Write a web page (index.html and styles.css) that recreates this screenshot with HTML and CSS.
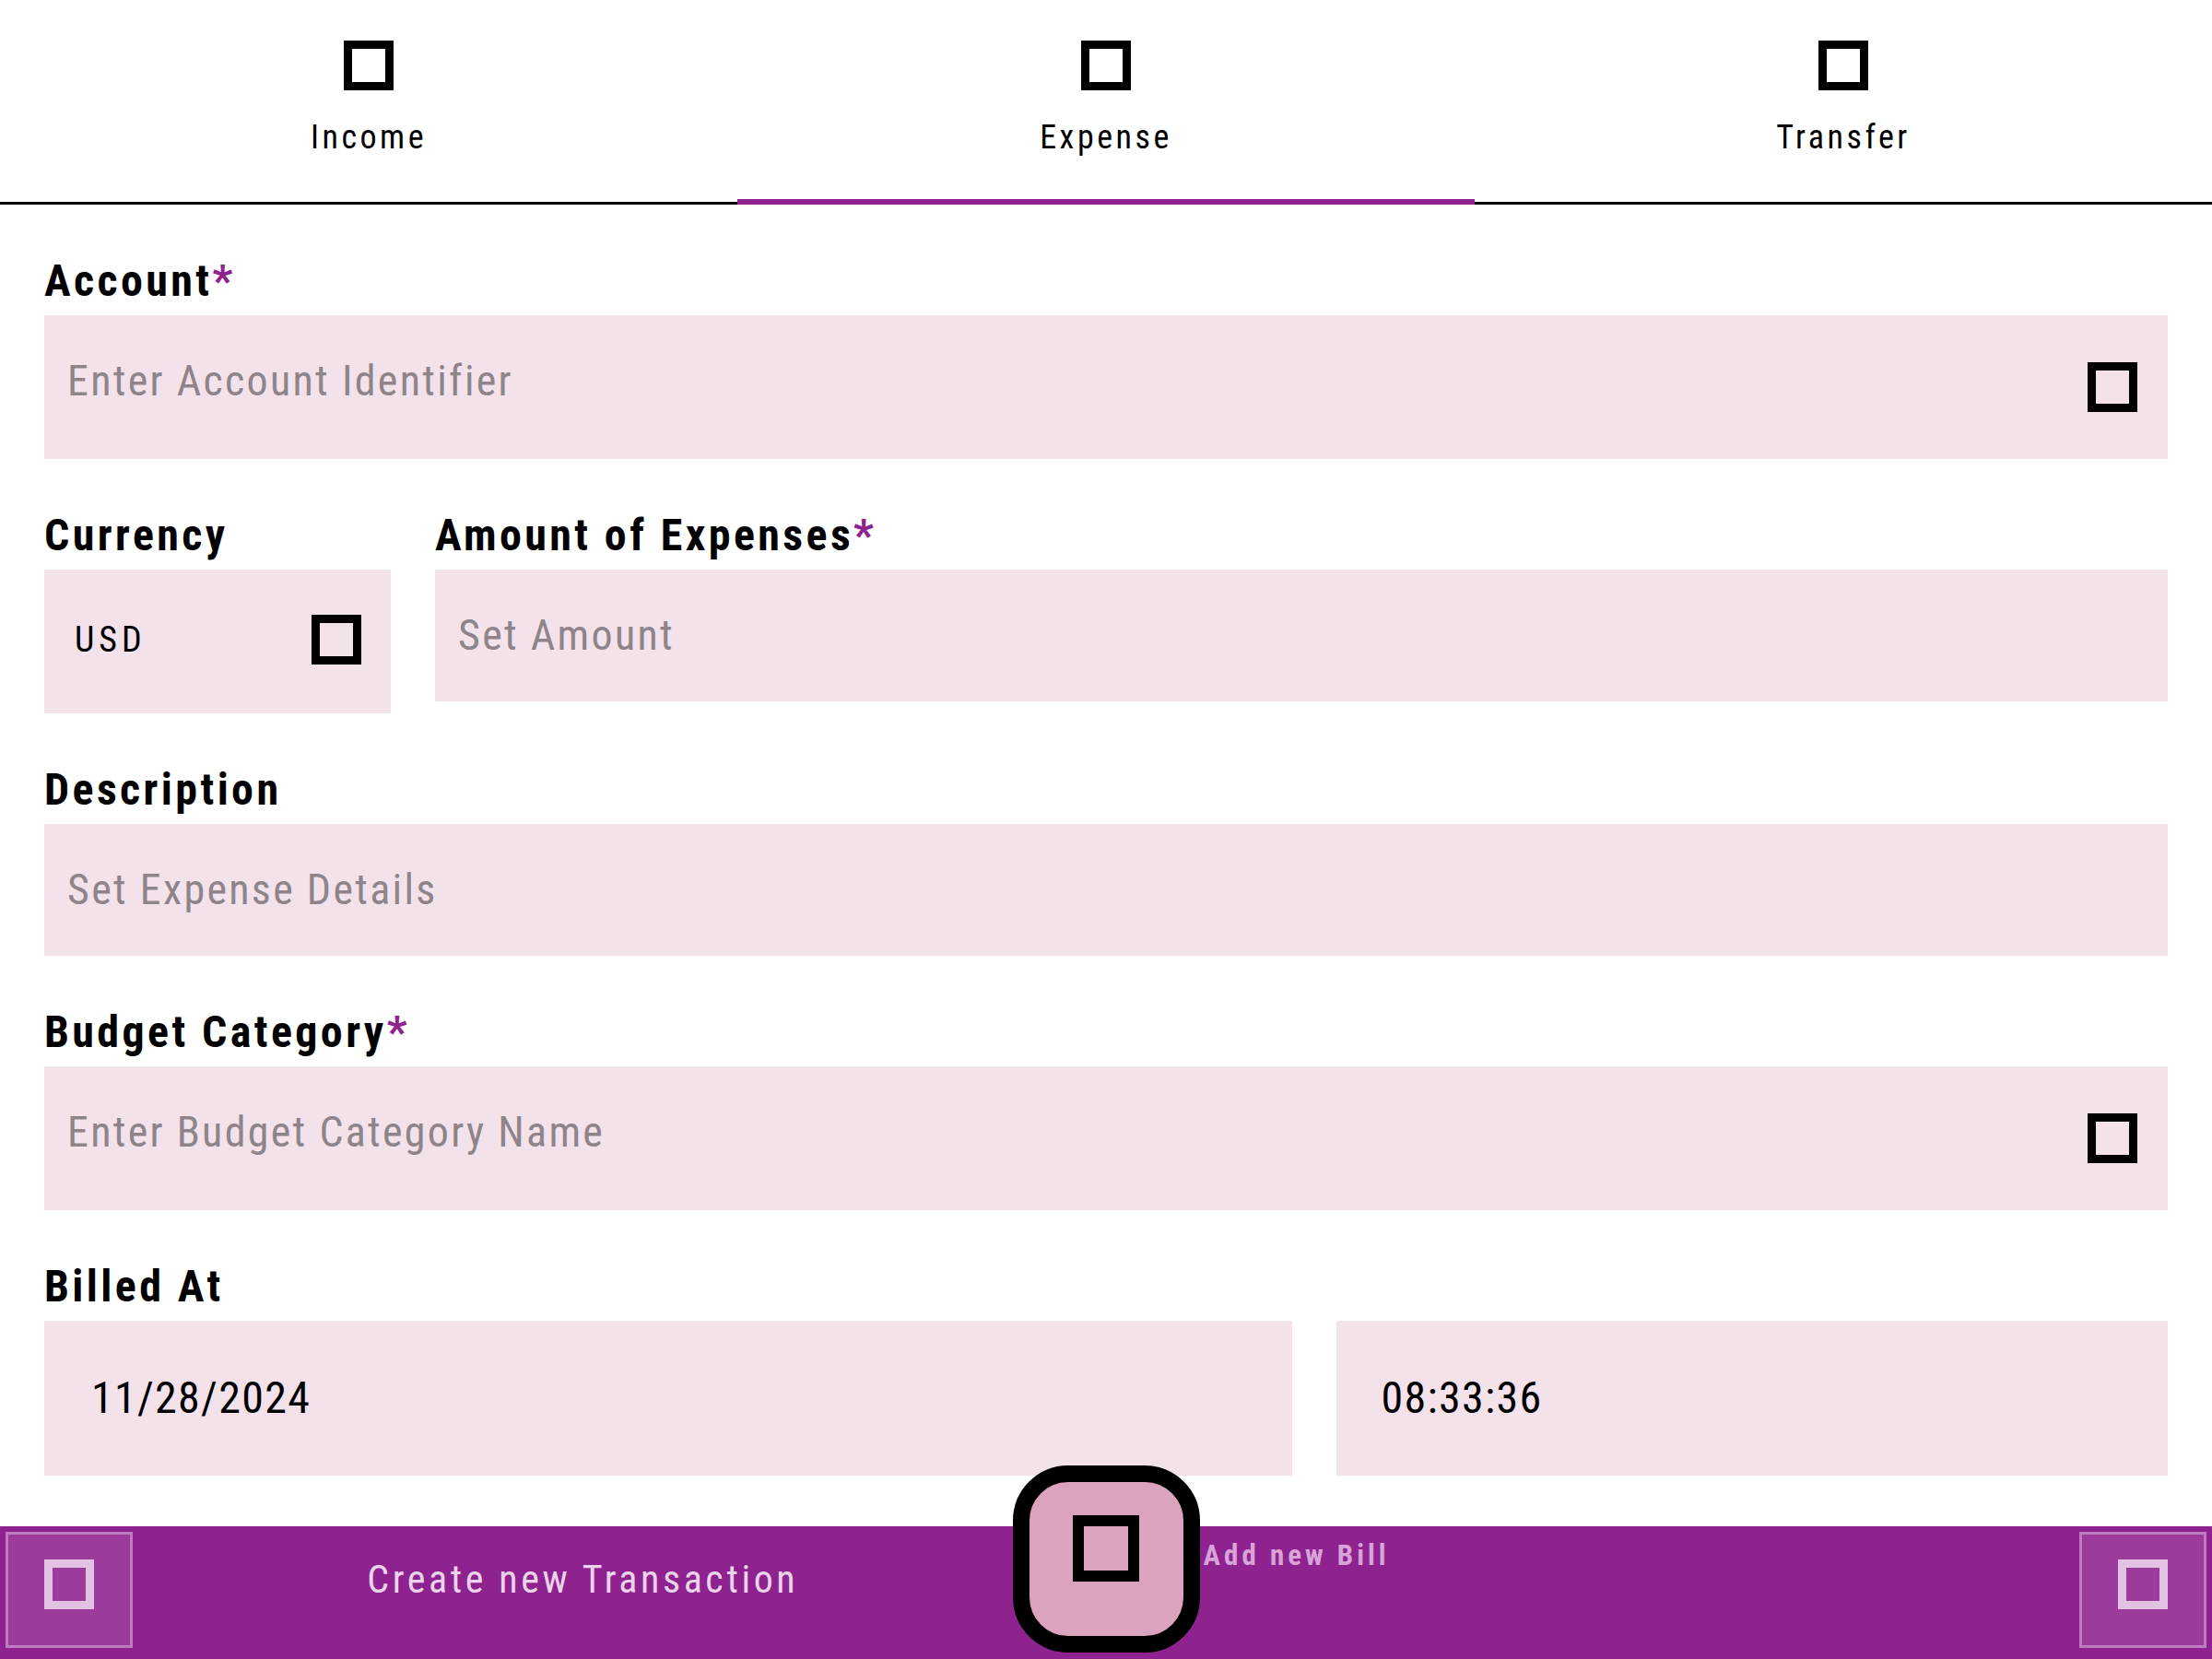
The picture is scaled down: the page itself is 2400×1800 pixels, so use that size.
FILE: index.html
```html
<!DOCTYPE html>
<html lang="en">
<head>
<meta charset="utf-8">
<title>New Expense</title>
<link rel="stylesheet" href="styles.css">
</head>
<body>
<div class="app">
  <nav class="tabs">
    <div class="tab"><span class="ico"></span><span class="tab-label">Income</span></div>
    <div class="tab active"><span class="ico"></span><span class="tab-label">Expense</span></div>
    <div class="tab"><span class="ico"></span><span class="tab-label">Transfer</span></div>
  </nav>

  <form class="form">
    <div class="field">
      <label class="label">Account<span class="req">*</span></label>
      <div class="input has-icon"><span class="ph">Enter Account Identifier</span><span class="ico ico-in"></span></div>
    </div>

    <div class="row row-1-5">
      <div class="field">
        <label class="label">Currency</label>
        <div class="select"><span class="select-value">USD</span><span class="ico"></span></div>
      </div>
      <div class="field">
        <label class="label">Amount of Expenses<span class="req">*</span></label>
        <div class="input"><span class="ph">Set Amount</span></div>
      </div>
    </div>

    <div class="field">
      <label class="label">Description</label>
      <div class="input"><span class="ph">Set Expense Details</span></div>
    </div>

    <div class="field">
      <label class="label">Budget Category<span class="req">*</span></label>
      <div class="input has-icon"><span class="ph">Enter Budget Category Name</span><span class="ico ico-in"></span></div>
    </div>

    <div class="field">
      <label class="label">Billed At</label>
      <div class="row row-3-2">
        <div class="dt"><span class="dt-value">11/28/2024</span></div>
        <div class="dt dt-time"><span class="dt-value">08:33:36</span></div>
      </div>
    </div>
  </form>

  <footer class="bar">
    <div class="bar-btn"><span class="ico ico-light"></span></div>
    <div class="bar-left"><span class="bar-text">Create new Transaction</span></div>
    <div class="fab"><span class="fab-ico"></span></div>
    <div class="bar-right"><span class="bar-sub">Add new Bill</span></div>
    <div class="bar-btn"><span class="ico ico-light"></span></div>
  </footer>
</div>
</body>
</html>
```

FILE: styles.css
```css
* { box-sizing: border-box; }

html, body {
  margin: 0;
  padding: 0;
  background: #ffffff;
}

body {
  font-family: Roboto, "Noto Sans", "Liberation Sans", sans-serif;
  font-stretch: 87.5%;
  color: #000000;
}

.app {
  min-height: 100vh;
  display: flex;
  flex-direction: column;
}

/* generic "icon" placeholder box */
.ico {
  display: block;
  width: 54px;
  height: 54px;
  border: 9px solid #000000;
  flex: none;
}

/* ---------- tabs ---------- */
.tabs {
  display: flex;
  border-bottom: 3px solid #000000;
}

.tab {
  flex: 1;
  position: relative;
  display: flex;
  flex-direction: column;
  align-items: center;
  padding: 44px 0 49px;
}

.tab-label {
  margin-top: 30px;
  font-size: 36px;
  line-height: 42px;
  letter-spacing: 3.5px;
}

.tab.active::after {
  content: "";
  position: absolute;
  left: 0;
  right: 0;
  bottom: -3px;
  height: 6px;
  background: #8e228e;
}

/* ---------- form ---------- */
.form {
  display: flex;
  flex-direction: column;
  gap: 55px;
  padding: 55px 48px 0;
}

.field {
  display: flex;
  flex-direction: column;
  min-width: 0;
}

.label {
  font-size: 48px;
  line-height: 56px;
  font-weight: 700;
  letter-spacing: 3.4px;
  margin-bottom: 9px;
}

.req {
  color: #8e228e;
}

.row {
  display: grid;
  column-gap: 48px;
  align-items: start;
}

.row-1-5 { grid-template-columns: 1fr 5fr; }
.row-3-2 { grid-template-columns: 3fr 2fr; }

.input {
  background: #f4e2ea;
  display: flex;
  align-items: flex-start;
  justify-content: space-between;
  padding: 44px 25px 45px;
}

.ph {
  font-size: 46px;
  line-height: 54px;
  color: #8f8489;
  letter-spacing: 2.3px;
}

.ico-in {
  margin: 7px 8px 6px 0;
}

.select {
  background: #f4e2ea;
  height: 156px;
  display: flex;
  align-items: center;
  justify-content: space-between;
  padding: 0 32px 5px 33px;
}

.select-value {
  font-size: 38px;
  line-height: 44px;
  letter-spacing: 5px;
}

.dt {
  background: #f4e2ea;
  height: 168px;
  display: flex;
  align-items: center;
  padding-left: 51px;
}

.dt-time {
  padding-left: 49px;
}

.dt-value {
  font-size: 48px;
  line-height: 56px;
  letter-spacing: 1.3px;
}

/* ---------- bottom bar ---------- */
.bar {
  margin-top: auto;
  height: 144px;
  background: #8e228e;
  display: grid;
  grid-template-columns: 138px 1fr 203px 1fr 138px;
  align-items: start;
  padding: 6px;
}

.bar-btn {
  width: 138px;
  height: 126px;
  background: #9c3b9c;
  border: 3px solid #bf7bbf;
  display: flex;
  justify-content: center;
  padding-top: 27px;
}

.ico-light {
  border-color: #e2c2e2;
}

.bar-left {
  display: flex;
  justify-content: center;
  padding-left: 22px;
  margin-top: 27px;
}

.bar-text {
  font-size: 42px;
  line-height: 49px;
  color: #ebd3eb;
  letter-spacing: 3.6px;
}

.fab {
  width: 203px;
  height: 203px;
  margin-top: -72px;
  background: #dba3be;
  border: 18px solid #000000;
  border-radius: 60px;
  display: flex;
  justify-content: center;
  padding-top: 36px;
}

.fab-ico {
  display: block;
  width: 72px;
  height: 72px;
  border: 12px solid #000000;
}

.bar-right {
  display: flex;
  margin-top: 8px;
  padding-left: 4px;
}

.bar-sub {
  font-size: 31px;
  line-height: 36px;
  font-weight: 700;
  color: #d8a3d8;
  letter-spacing: 4px;
}
```
